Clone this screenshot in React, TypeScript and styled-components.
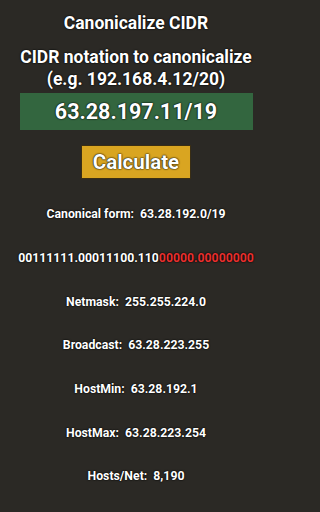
import React from 'react'
import styled, { createGlobalStyle } from 'styled-components'

const GlobalStyle = createGlobalStyle`
    html, body {
        margin: 0;
        padding: 0;
        background: #2b2925;
    }
    body {
        font-family: Roboto, "Liberation Sans", sans-serif;
    }
`

const Screen = styled.div`
    width: 272px;
    height: 512px;
    box-sizing: border-box;
    display: flex;
    flex-direction: column;
    align-items: center;
    padding-top: 13px;
    color: #ffffff;
    font-weight: 700;
    text-shadow: 0 0 1px #000, 0 0 2px #000;
    overflow: hidden;
`

const Title = styled.div`
    font-size: 17.5px;
    line-height: 21px;
    text-align: center;
`

const Prompt = styled.div`
    margin-top: 12px;
    font-size: 17.5px;
    line-height: 22px;
    text-align: center;
`

const InputBox = styled.div`
    margin-top: 3px;
    width: 233px;
    height: 41px;
    background: #33663f;
    display: flex;
    align-items: center;
    justify-content: center;
    font-size: 21.5px;
`

const CalcButton = styled.button`
    margin-top: 15px;
    width: 110px;
    height: 37px;
    box-sizing: border-box;
    background: #d9a521;
    border: 1px solid #3a2e14;
    color: #ffffff;
    font-family: inherit;
    font-weight: 700;
    font-size: 20.5px;
    text-shadow: inherit;
    padding: 0;
    cursor: pointer;
`

const Results = styled.div`
    margin-top: 27px;
    display: flex;
    flex-direction: column;
    align-items: center;
`

const Row = styled.div`
    height: 43.7px;
    display: flex;
    align-items: flex-start;
    font-size: 12.25px;
    line-height: 16px;
    white-space: pre;
`

const HostBits = styled.span`
    color: #e8302f;
`

const rows: [string, string][] = [
    ['Netmask', '255.255.224.0'],
    ['Broadcast', '63.28.223.255'],
    ['HostMin', '63.28.192.1'],
    ['HostMax', '63.28.223.254'],
    ['Hosts/Net', '8,190'],
]

const App = () => {
    return (
        <>
            <GlobalStyle />
            <Screen>
                <Title>Canonicalize CIDR</Title>
                <Prompt>
                    CIDR notation to canonicalize
                    <br />
                    (e.g. 192.168.4.12/20)
                </Prompt>
                <InputBox>63.28.197.11/19</InputBox>
                <CalcButton>Calculate</CalcButton>
                <Results>
                    <Row>{'Canonical form:  63.28.192.0/19'}</Row>
                    <Row>
                        00111111.00011100.110<HostBits>00000.00000000</HostBits>
                    </Row>
                    {rows.map(([label, value]) => (
                        <Row key={label}>{`${label}:  ${value}`}</Row>
                    ))}
                </Results>
            </Screen>
        </>
    )
}

export default App
